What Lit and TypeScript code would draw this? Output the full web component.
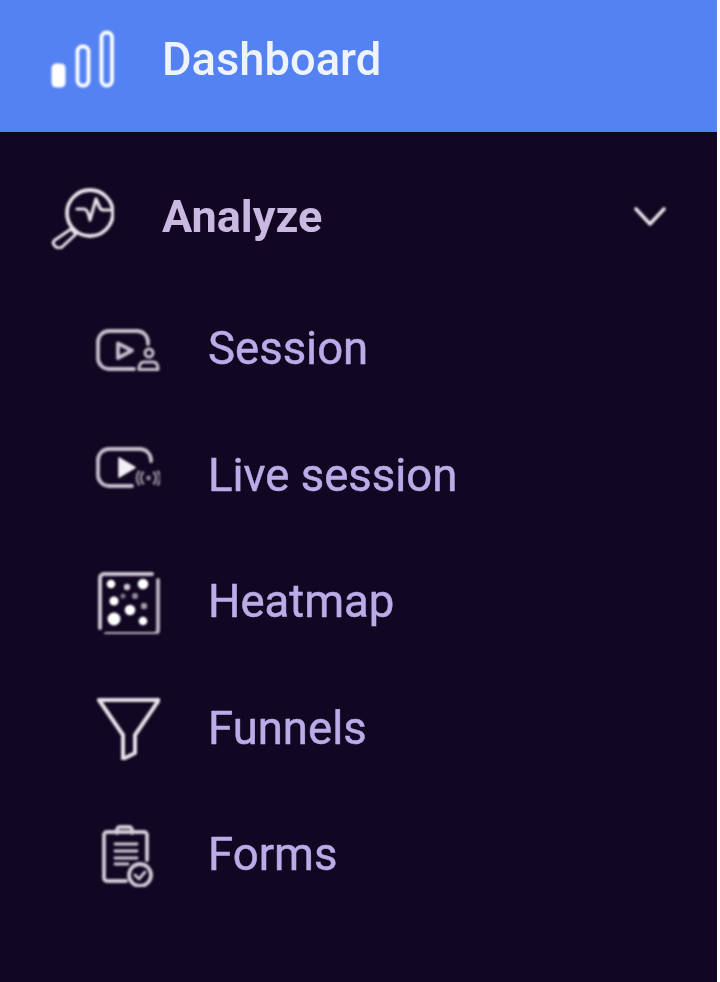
import { LitElement, css, html, svg } from 'lit'
import { customElement } from 'lit/decorators.js'

type NavItem = { label: string; box: string; icon: unknown }

const subItems: NavItem[] = [
  {
    label: 'Session',
    box: '96 317 64 64',
    icon: svg`
      <g stroke="#c4bfcd">
        <path d="M134 369H109a11 11 0 0 1-11-11V342a11 11 0 0 1 11-11h28a11 11 0 0 1 11 11v2" />
        <path d="M118 343.500 132 350.500 118 358Z" />
        <circle cx="149" cy="353" r="4" stroke-width="3" />
        <path d="M139 369.500c0-5 2-7.500 5-7.500h9c3 0 5 2.500 5 7.500Z" stroke-width="3" />
      </g>
    `,
  },
  {
    label: 'Live session',
    box: '96 443 64 64',
    icon: svg`
      <path d="M132 486H109a11 11 0 0 1-11-11V460a11 11 0 0 1 11-11h31a11 11 0 0 1 11 11v1" stroke="#c4bfcd" />
      <path d="M119 458 135 467.500 119 477Z" fill="#f2eff6" stroke="#f2eff6" stroke-width="1.500" />
      <circle cx="148.500" cy="478" r="2.400" fill="#8f8899" stroke="none" />
      <path d="M143 472.500a8 8 0 0 0 0 11M154 472.500a8 8 0 0 1 0 11M139 471.500a11 11 0 0 0 0 13M158 471.500a11 11 0 0 1 0 13" stroke="#8f8899" stroke-width="2.600" />
    `,
  },
  {
    label: 'Heatmap',
    box: '96 570 64 64',
    icon: svg`
      <path d="M100 628V578a4 4 0 0 1 4-4H152" stroke="#c9c4d2" stroke-width="4" />
      <path d="M158 580V630a4 4 0 0 1-4 4H106" stroke="#b5afc0" stroke-width="4" />
      <g fill="#fff" stroke="none">
        <circle cx="111" cy="584" r="4.300" />
        <circle cx="127" cy="587" r="3.200" opacity=".8" />
        <circle cx="143" cy="584" r="5.300" />
        <circle cx="123" cy="596" r="2.600" opacity=".45" />
        <circle cx="135" cy="596" r="3" opacity=".55" />
        <circle cx="114" cy="601" r="4.600" />
        <circle cx="144" cy="606" r="3.200" opacity=".6" />
        <circle cx="130" cy="610" r="5.300" />
        <circle cx="114" cy="619" r="6.500" />
        <circle cx="143" cy="621" r="4.300" />
      </g>
    `,
  },
  {
    label: 'Funnels',
    box: '96 696 64 64',
    icon: svg`
      <path d="M99 700H159L135 735V753L123 759V735Z" stroke-width="4" />
    `,
  },
  {
    label: 'Forms',
    box: '96 823 64 64',
    icon: svg`
      <g stroke="#d0ccd8">
        <path d="M126 881H107a3 3 0 0 1-3-3V835a3 3 0 0 1 3-3h37a3 3 0 0 1 3 3v25" />
        <path d="M117 833v-3a3 3 0 0 1 3-3h9a3 3 0 0 1 3 3v3" />
        <path d="M115 844H137M115 851H137M115 858H137M115 864H128" stroke-width="2.800" />
        <circle cx="140" cy="875" r="11" />
        <path d="M135 875l4 4 6-7" stroke-width="2.800" />
      </g>
    `,
  },
]

@customElement('app-root')
export class AppRoot extends LitElement {
  static styles = css`
    :host {
      display: block;
      width: 720px;
      height: 982px;
      background: #fff;
    }

    nav {
      width: 717px;
      height: 982px;
      background: #120722;
      font-family: Roboto, "Liberation Sans", sans-serif;
      font-size: 45.500px;
      overflow: hidden;
    }

    .row {
      display: flex;
      align-items: center;
      height: 126.500px;
    }

    .row svg {
      filter: blur(0.8px);
    }

    .row span {
      filter: blur(0.7px);
      margin-left: -1px;
    }

    .dashboard {
      height: 118px;
      padding: 0 0 14px 50px;
      background: #5482f3;
      color: #eef3fe;
      font-size: 45.300px;
      font-weight: 500;
      gap: 49px;
    }

    .analyze {
      margin: 22px 0 5px;
      padding-left: 50px;
      gap: 49px;
      color: #c9b9e0;
      font-size: 45px;
      font-weight: 700;
    }

    .analyze span {
      margin-bottom: 2px;
    }

    .analyze .chevron {
      margin-left: auto;
      margin-right: 50px;
      width: 34px;
      height: 24px;
    }

    .sub {
      padding-left: 96px;
      gap: 49px;
      color: #b9ace8;
      font-weight: 400;
      -webkit-text-stroke: 0.5px #b9ace8;
    }

    svg.icon {
      width: 64px;
      height: 64px;
      flex: none;
      fill: none;
      stroke: #e6e3ea;
      stroke-width: 3.800;
      stroke-linecap: round;
      stroke-linejoin: round;
    }
  `

  render() {
    return html`
      <nav>
        <div class="row dashboard">
          <svg class="icon" viewBox="50 27 64 64">
            <rect x="52" y="64" width="13" height="23" rx="4" fill="#fff" stroke="#fff" stroke-width="1" />
            <rect x="77.500" y="46.500" width="11" height="39" rx="5" stroke="#fff" stroke-width="3.800" />
            <rect x="101.500" y="32.500" width="10.500" height="53" rx="5" stroke="#fff" stroke-width="3.800" />
          </svg>
          <span>Dashboard</span>
        </div>
        <div class="row analyze">
          <svg class="icon" viewBox="50 185 64 64">
            <circle cx="90" cy="213" r="23" />
            <path d="M77 209H84Q87 209 89 216L90 220 96 199 100 208Q101 210 104 210H110" stroke-width="3.200" />
            <path d="M71 229 76 234 62 247Q59 249 56 247L54 245Q52 242 55 240Z" stroke-width="3" />
          </svg>
          <span>Analyze</span>
          <svg class="chevron" viewBox="0 0 34 24" fill="none" stroke="#e6e3ea" stroke-width="3.600" stroke-linecap="round" stroke-linejoin="round">
            <path d="M3 4 17 19 31 4" />
          </svg>
        </div>
        ${subItems.map(
          (item) => html`
            <div class="row sub">
              <svg class="icon" viewBox=${item.box}>${item.icon}</svg>
              <span>${item.label}</span>
            </div>
          `,
        )}
      </nav>
    `
  }
}
